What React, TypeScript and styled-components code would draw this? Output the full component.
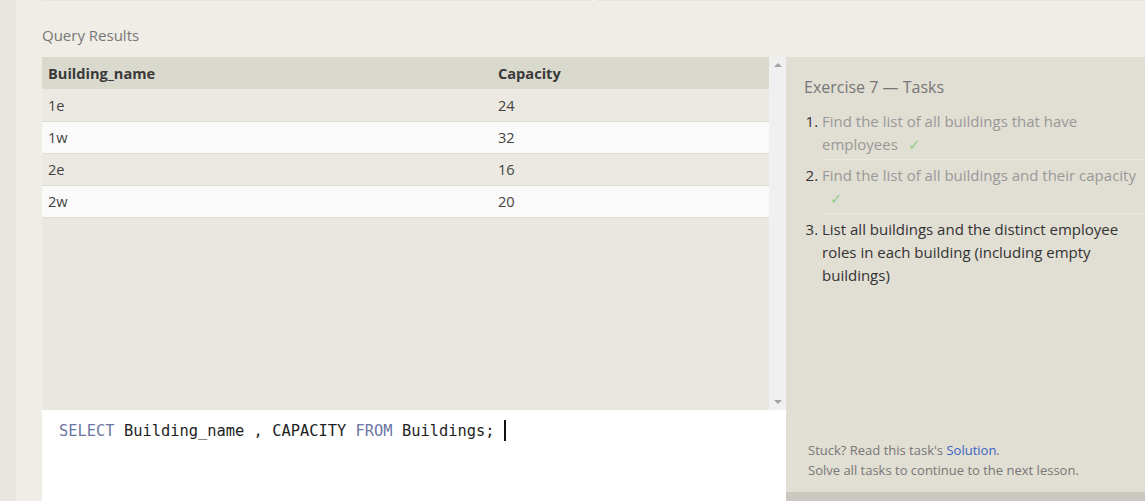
import React from "react";
import styled, { createGlobalStyle } from "styled-components";

const Global = createGlobalStyle`
  html, body { margin: 0; padding: 0; background: #f0ede6; }
  body { font-family: "Open Sans", "Liberation Sans", sans-serif; overflow: hidden; }
  * { box-sizing: border-box; }
`;

const Page = styled.div`
  display: flex;
  width: 1145px;
  height: 501px;
  overflow: hidden;
`;

const Sidebar = styled.div`
  width: 16px;
  flex: none;
  background: #e9e6e1;
`;

const Content = styled.div`
  flex: 1;
  display: flex;
  flex-direction: column;
  padding-left: 26px;
  min-width: 0;
`;

const TopCards = styled.div`
  display: flex;
  gap: 6px;
  height: 2px;
  flex: none;
`;

const TopCard = styled.div<{ $w: number }>`
  width: ${(p) => p.$w}px;
  border-top: 1px solid #e6e3dc;
`;

const Title = styled.div`
  font-size: 15px;
  color: #777;
  height: 55px;
  padding-top: 23px;
  line-height: 20px;
`;

const Workspace = styled.div`
  display: flex;
  flex: 1;
  min-height: 0;
`;

const LeftCol = styled.div`
  width: 744px;
  flex: none;
  display: flex;
  flex-direction: column;
`;

const Results = styled.div`
  height: 353px;
  display: flex;
  background: #e9e7e0;
`;

const TableWrap = styled.div`
  flex: 1;
`;

const Table = styled.table`
  width: 100%;
  border-collapse: collapse;
  font-size: 14.6px;
`;

const Th = styled.th<{ $w?: number }>`
  text-align: left;
  font-weight: 700;
  color: #3a3a3a;
  background: #dad9ce;
  height: 32px;
  padding: 0 6px;
  width: ${(p) => (p.$w ? `${p.$w}px` : "auto")};
`;

const Tr = styled.tr<{ $alt: boolean }>`
  background: ${(p) => (p.$alt ? "#fafafa" : "#ebe9e2")};
  border-bottom: 1px solid #dedcd4;
`;

const Td = styled.td`
  height: 32px;
  padding: 0 6px;
  color: #444;
`;

const Scrollbar = styled.div`
  width: 17px;
  flex: none;
  background: #f0f0f0;
  display: flex;
  flex-direction: column;
  justify-content: space-between;
  align-items: center;
  padding: 6px 0;
`;

const Arrow = styled.div<{ $down?: boolean }>`
  width: 0;
  height: 0;
  border-left: 4px solid transparent;
  border-right: 4px solid transparent;
  ${(p) =>
    p.$down
      ? "border-top: 4px solid #a3a3a3;"
      : "border-bottom: 4px solid #a3a3a3;"}
`;

const Editor = styled.div`
  flex: 1;
  background: #fff;
  padding: 9px 17px;
  font-family: "DejaVu Sans Mono", "Liberation Mono", monospace;
  font-size: 15.4px;
  line-height: 24px;
  color: #1e1e1e;
  white-space: pre;
`;

const Kw = styled.span`
  color: #6c76a3;
`;

const Cursor = styled.span`
  display: inline-block;
  width: 2px;
  height: 21px;
  background: #111;
  vertical-align: -5px;
`;

const RightCol = styled.div`
  width: 380px;
  flex: none;
  display: flex;
  flex-direction: column;
`;

const Panel = styled.div`
  height: 435px;
  flex: none;
  background: #e1ded3;
  padding: 18px 18px 0 18px;
  display: flex;
  flex-direction: column;
`;

const BottomBar = styled.div`
  flex: 1;
  background: #cac8c0;
`;

const PanelTitle = styled.div`
  font-size: 16px;
  color: #777;
  line-height: 24px;
  margin-bottom: 11px;
`;

const TaskList = styled.ol`
  margin: 0;
  padding: 0 0 0 18px;
  font-size: 15px;
  line-height: 23px;
  width: 360px;
  flex: 1;
`;

const Task = styled.li<{ $done: boolean; $sep: boolean }>`
  color: ${(p) => (p.$done ? "#999" : "#333")};
  padding-bottom: 3px;
  margin-bottom: 4px;
  border-bottom: ${(p) => (p.$sep ? "1px solid #ebe8df" : "none")};
  &::marker {
    color: #333;
  }
`;

const Check = styled.span<{ $gap: number }>`
  color: #8fcf8f;
  margin-left: ${(p) => p.$gap}px;
`;

const Footer = styled.div`
  font-size: 13px;
  color: #777;
  line-height: 20px;
  padding: 0 0 12px 4px;
`;

const Link = styled.a`
  color: #3b63c4;
  text-decoration: none;
`;

const rows = [
  ["1e", "24"],
  ["1w", "32"],
  ["2e", "16"],
  ["2w", "20"],
];

export default function App() {
  return (
    <>
      <Global />
      <Page>
        <Sidebar />
        <Content>
          <TopCards>
            <TopCard $w={560} />
            <TopCard $w={560} />
          </TopCards>
          <Title>Query Results</Title>
          <Workspace>
            <LeftCol>
              <Results>
                <TableWrap>
                  <Table>
                    <thead>
                      <tr>
                        <Th $w={450}>Building_name</Th>
                        <Th>Capacity</Th>
                      </tr>
                    </thead>
                    <tbody>
                      {rows.map((r, i) => (
                        <Tr key={r[0]} $alt={i % 2 === 1}>
                          <Td>{r[0]}</Td>
                          <Td>{r[1]}</Td>
                        </Tr>
                      ))}
                    </tbody>
                  </Table>
                </TableWrap>
                <Scrollbar>
                  <Arrow />
                  <Arrow $down />
                </Scrollbar>
              </Results>
              <Editor>
                <Kw>SELECT</Kw> Building_name , CAPACITY <Kw>FROM</Kw> Buildings; <Cursor />
              </Editor>
            </LeftCol>
            <RightCol>
              <Panel>
                <PanelTitle>Exercise 7 — Tasks</PanelTitle>
                <TaskList>
                  <Task $done $sep>
                    Find the list of all buildings that have
                    <br />
                    employees
                    <Check $gap={10}>✓</Check>
                  </Task>
                  <Task $done $sep>
                    Find the list of all buildings and their capacity
                    <br />
                    <Check $gap={8}>✓</Check>
                  </Task>
                  <Task $done={false} $sep={false}>
                    List all buildings and the distinct employee
                    <br />
                    roles in each building (including empty
                    <br />
                    buildings)
                  </Task>
                </TaskList>
                <Footer>
                  Stuck? Read this task's <Link href="#">Solution</Link>.
                  <br />
                  Solve all tasks to continue to the next lesson.
                </Footer>
              </Panel>
              <BottomBar />
            </RightCol>
          </Workspace>
        </Content>
      </Page>
    </>
  );
}
